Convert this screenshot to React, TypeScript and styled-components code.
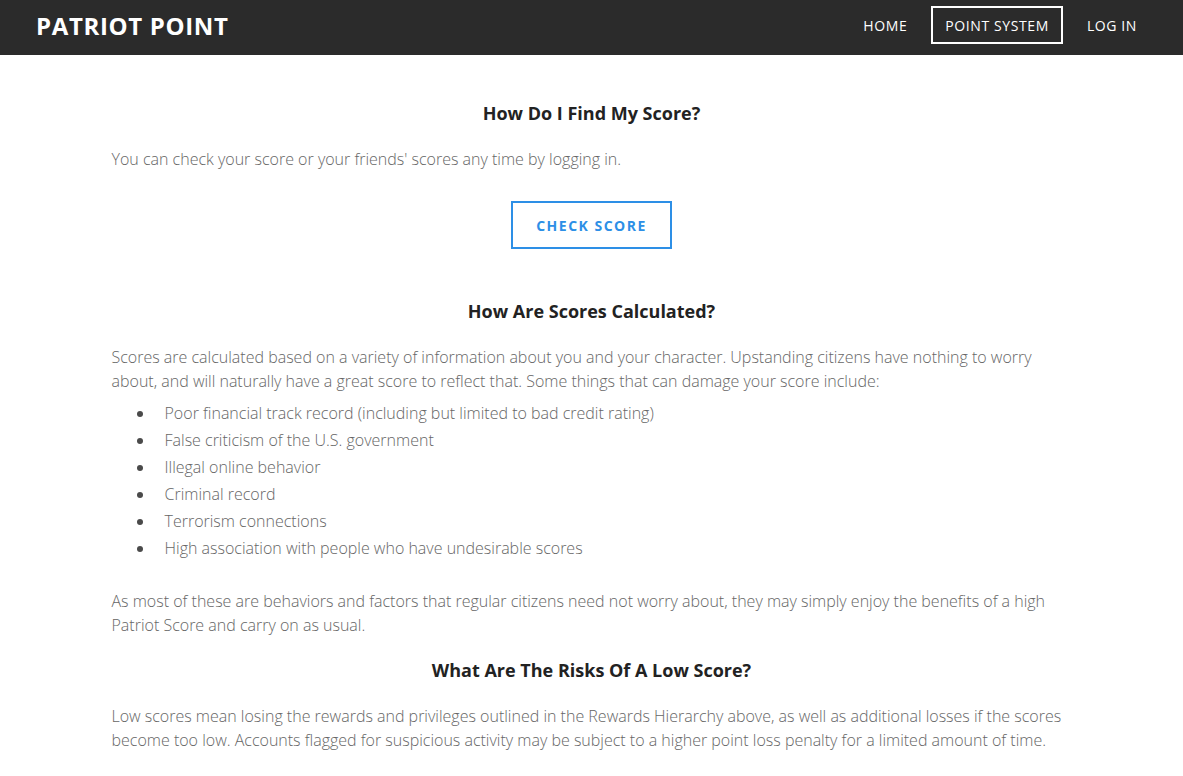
import React from "react";
import styled, { createGlobalStyle } from "styled-components";

const Global = createGlobalStyle`
  html, body { margin: 0; padding: 0; background: #fff; }
  body { font-family: "Open Sans", "Liberation Sans", sans-serif; }
  * { box-sizing: border-box; }
`;

const NavBar = styled.header`
  height: 55px;
  background: #2b2b2b;
  display: flex;
  align-items: center;
  justify-content: space-between;
  padding: 0 46px 0 36px;
`;

const Logo = styled.div`
  color: #fff;
  font-size: 24px;
  font-weight: 700;
  letter-spacing: 0.65px;
  margin-bottom: 4px;
`;

const NavList = styled.nav`
  display: flex;
  align-items: center;
  gap: 24px;
  margin-bottom: 5px;
`;

const NavItem = styled.a<{ $active?: boolean }>`
  color: #fff;
  font-size: 14px;
  font-weight: 400;
  letter-spacing: 0.6px;
  text-decoration: none;
  padding: 0 ${(p) => (p.$active ? "12px" : "0")};
  height: 38px;
  display: flex;
  align-items: center;
  border: ${(p) => (p.$active ? "2px solid #fff" : "none")};
`;

const Main = styled.main`
  max-width: 960px;
  margin: 0 auto;
  padding-top: 46px;
`;

const Heading = styled.h2<{ $top?: number }>`
  margin: ${(p) => p.$top ?? 0}px 0 22px;
  text-align: center;
  font-size: 18px;
  line-height: 24px;
  font-weight: 700;
  color: #222;
`;

const Para = styled.p`
  margin: 0;
  font-size: 16px;
  line-height: 24px;
  font-weight: 300;
  color: #666;
`;

const ButtonRow = styled.div`
  display: flex;
  justify-content: center;
  margin-top: 30px;
`;

const OutlineButton = styled.button`
  width: 161px;
  height: 48px;
  background: #fff;
  border: 2px solid #2d8fe6;
  color: #2d8fe6;
  font-family: inherit;
  font-size: 14px;
  font-weight: 700;
  letter-spacing: 1.5px;
  padding: 0;
  cursor: pointer;
`;

const List = styled.ul`
  margin: 7px 0 27px;
  padding-left: 53px;
  list-style: none;
  color: #666;
  font-size: 16px;
  font-weight: 300;
  line-height: 27px;
`;

const Item = styled.li`
  &::before {
    content: "";
    display: inline-block;
    width: 6px;
    height: 6px;
    border-radius: 50%;
    background: #4a4a4a;
    margin-left: -28px;
    margin-right: 22px;
    vertical-align: middle;
    position: relative;
    top: -1px;
  }
`;

const reasons = [
  "Poor financial track record (including but limited to bad credit rating)",
  "False criticism of the U.S. government",
  "Illegal online behavior",
  "Criminal record",
  "Terrorism connections",
  "High association with people who have undesirable scores",
];

export default function App() {
  return (
    <>
      <Global />
      <NavBar>
        <Logo>PATRIOT POINT</Logo>
        <NavList>
          <NavItem href="#">HOME</NavItem>
          <NavItem href="#" $active>POINT SYSTEM</NavItem>
          <NavItem href="#">LOG IN</NavItem>
        </NavList>
      </NavBar>
      <Main>
        <Heading>How Do I Find My Score?</Heading>
        <Para>You can check your score or your friends' scores any time by logging in.</Para>
        <ButtonRow>
          <OutlineButton>CHECK SCORE</OutlineButton>
        </ButtonRow>
        <Heading $top={50}>How Are Scores Calculated?</Heading>
        <Para>
          Scores are calculated based on a variety of information about you and your character. Upstanding citizens have nothing to worry about, and will naturally have a great score to reflect that. Some things that can damage your score include:
        </Para>
        <List>
          {reasons.map((r) => (
            <Item key={r}>{r}</Item>
          ))}
        </List>
        <Para>
          As most of these are behaviors and factors that regular citizens need not worry about, they may simply enjoy the benefits of a high Patriot Score and carry on as usual.
        </Para>
        <Heading $top={21}>What Are The Risks Of A Low Score?</Heading>
        <Para>
          Low scores mean losing the rewards and privileges outlined in the Rewards Hierarchy above, as well as additional losses if the scores become too low. Accounts flagged for suspicious activity may be subject to a higher point loss penalty for a limited amount of time.
        </Para>
      </Main>
    </>
  );
}
